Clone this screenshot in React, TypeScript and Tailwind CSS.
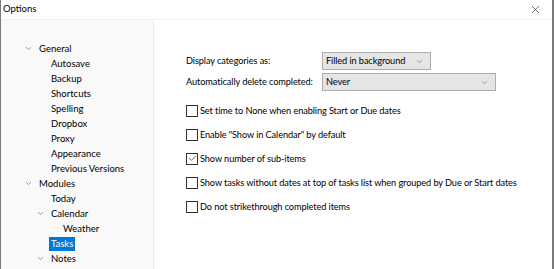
import { Check, ChevronDown, X } from 'lucide-react'

type Node = { label: string; depth: number; expanded?: boolean; selected?: boolean }

const TREE: Node[] = [
  { label: 'General', depth: 0, expanded: true },
  { label: 'Autosave', depth: 1 },
  { label: 'Backup', depth: 1 },
  { label: 'Shortcuts', depth: 1 },
  { label: 'Spelling', depth: 1 },
  { label: 'Dropbox', depth: 1 },
  { label: 'Proxy', depth: 1 },
  { label: 'Appearance', depth: 1 },
  { label: 'Previous Versions', depth: 1 },
  { label: 'Modules', depth: 0, expanded: true },
  { label: 'Today', depth: 1 },
  { label: 'Calendar', depth: 1, expanded: true },
  { label: 'Weather', depth: 2 },
  { label: 'Tasks', depth: 1, selected: true },
  { label: 'Notes', depth: 1, expanded: true },
]

const OPTIONS = [
  { label: 'Set time to None when enabling Start or Due dates', checked: false },
  { label: 'Enable "Show in Calendar" by default', checked: false },
  { label: 'Show number of sub-items', checked: true },
  { label: 'Show tasks without dates at top of tasks list when grouped by Due or Start dates', checked: false },
  { label: 'Do not strikethrough completed items', checked: false },
]

function TreeRow({ node }: { node: Node }) {
  const pad = node.depth === 0 ? 'pl-[23px]' : node.depth === 1 ? 'pl-[35px]' : 'pl-[47px]'
  return (
    <div className={`flex items-center h-[15px] ${pad}`}>
      <span className="w-[13px] flex items-center">
        {node.expanded && <ChevronDown className="h-[9px] w-[9px] text-[#555]" strokeWidth={1.5} />}
      </span>
      <span className={`px-[2px] leading-[14px] whitespace-nowrap ${node.selected ? 'bg-[#0078d7] text-white' : 'text-black'}`}>
        {node.label}
      </span>
    </div>
  )
}

function Select({ value, width }: { value: string; width: string }) {
  return (
    <div className={`${width} h-[18px] flex items-center justify-between bg-[#e5e5e5] border border-[#adadad] pl-[3px] pr-[6px]`}>
      <span className="whitespace-nowrap">{value}</span>
      <ChevronDown className="h-[9px] w-[9px] text-[#666]" strokeWidth={1.5} />
    </div>
  )
}

export default function App() {
  return (
    <div
      className="w-[554px] h-[269px] bg-white flex flex-col border-l border-r-2 border-[#7a7a7a] text-[9.5px] text-black overflow-hidden"
      style={{ fontFamily: '"Segoe UI", Lato, sans-serif' }}
    >
      <div className="h-[20px] flex items-center justify-between pl-[2px] pr-[10px] border-b border-[#f0f0f0] shrink-0">
        <span>Options</span>
        <X className="h-[13px] w-[13px] text-[#333]" strokeWidth={1.25} />
      </div>
      <div className="flex flex-1 min-h-0">
        <div className="w-[153px] bg-[#f9f9f9] border-r border-[#ececec] pt-[21px] shrink-0">
          {TREE.map((n) => (
            <TreeRow key={n.label} node={n} />
          ))}
        </div>
        <div className="flex-1 pl-[32px] pt-[32px] text-[9.2px] tracking-[-0.01em]">
          <div className="flex items-center">
            <span className="w-[136px] whitespace-nowrap">Display categories as:</span>
            <Select value="Filled in background" width="w-[109px]" />
          </div>
          <div className="flex items-center mt-[3px]">
            <span className="w-[136px] whitespace-nowrap">Automatically delete completed:</span>
            <Select value="Never" width="w-[174px]" />
          </div>
          <div className="flex flex-col gap-[11px] mt-[13px]">
            {OPTIONS.map((o) => (
              <div key={o.label} className="flex items-center h-[13px] gap-[2px]">
                <span className="w-[12px] h-[12px] border border-[#333] bg-white flex items-center justify-center shrink-0">
                  {o.checked && <Check className="h-[9px] w-[9px] text-[#333]" strokeWidth={2} />}
                </span>
                <span className="whitespace-nowrap">{o.label}</span>
              </div>
            ))}
          </div>
        </div>
      </div>
    </div>
  )
}
